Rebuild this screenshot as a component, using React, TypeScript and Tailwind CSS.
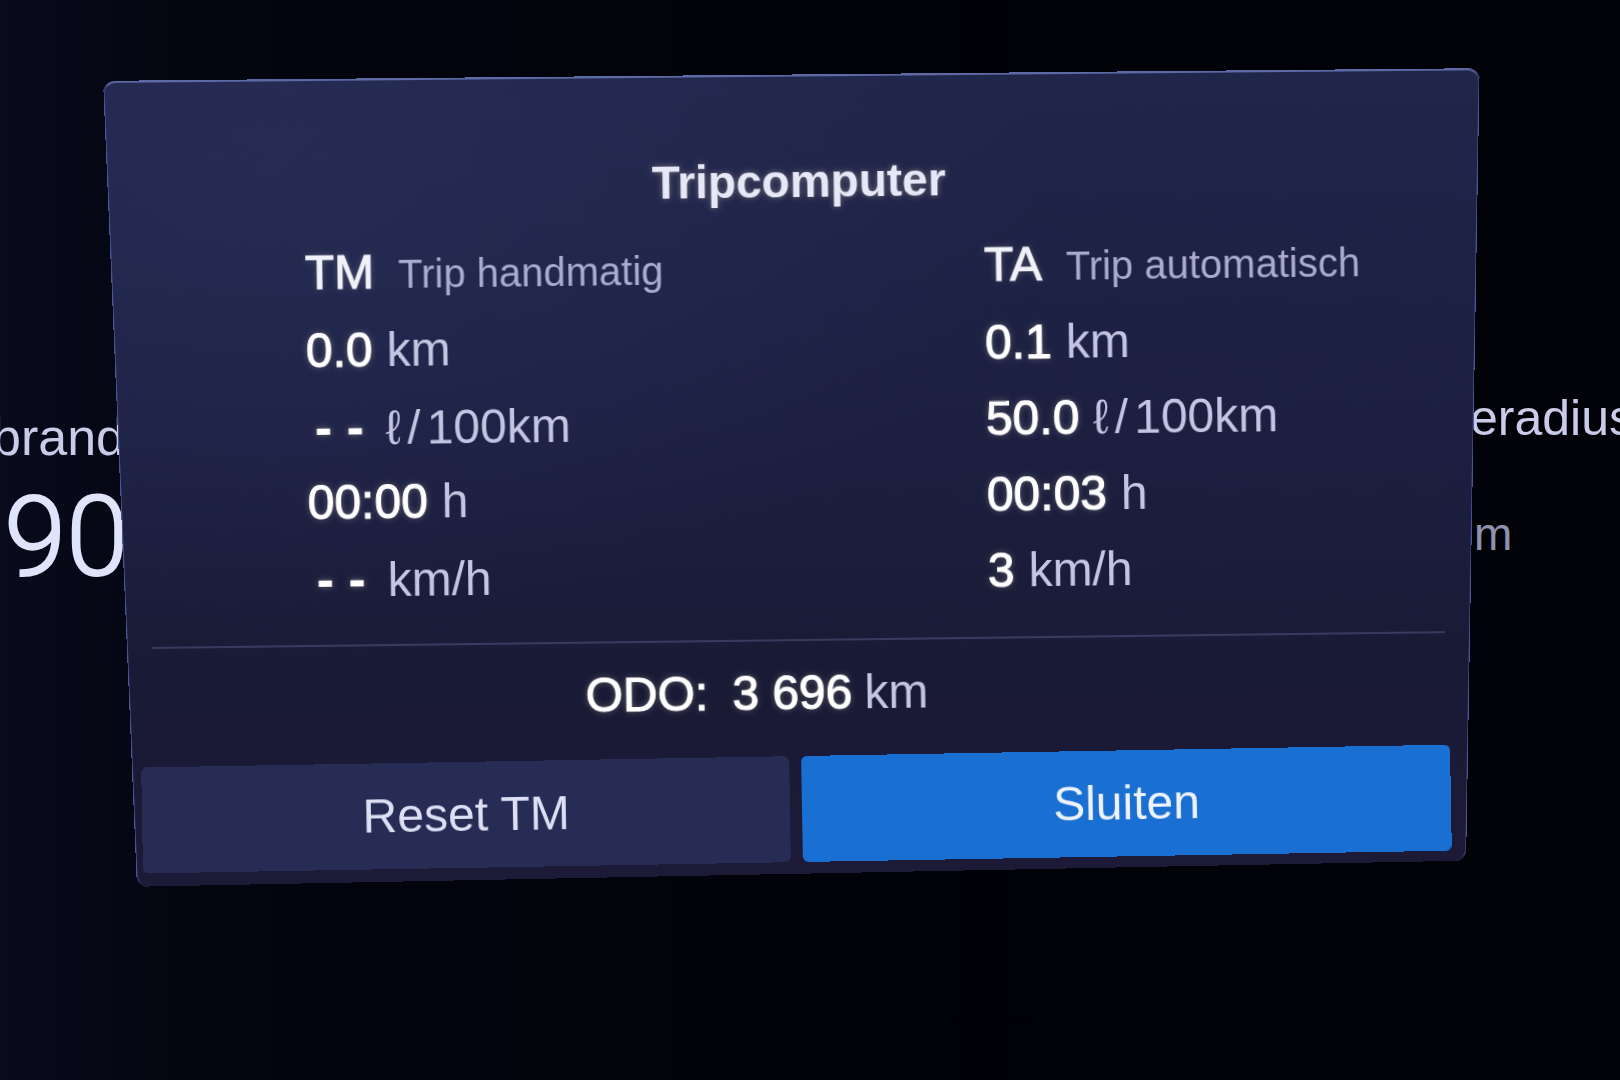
import React from 'react';

type Reading = { value: string; unit: string };

type Trip = { code: string; name: string; readings: Reading[] };

const trips: Trip[] = [
  {
    code: 'TM',
    name: 'Trip handmatig',
    readings: [
      { value: '0.0', unit: 'km' },
      { value: '- -', unit: 'ℓ/100km' },
      { value: '00:00', unit: 'h' },
      { value: '- -', unit: 'km/h' },
    ],
  },
  {
    code: 'TA',
    name: 'Trip automatisch',
    readings: [
      { value: '0.1', unit: 'km' },
      { value: '50.0', unit: 'ℓ/100km' },
      { value: '00:03', unit: 'h' },
      { value: '3', unit: 'km/h' },
    ],
  },
];

const Value = ({ children }: { children: string }) => (
  <span
    className={
      children === '- -'
        ? 'px-2 text-[52px] font-bold text-white [text-shadow:0_0_6px_#b9b6a080]'
        : 'text-[48px] text-white [-webkit-text-stroke:1px_white] [text-shadow:0_0_6px_#b9b6a080]'
    }
  >
    {children}
  </span>
);

/* The litre sign and the slash stand a little apart from what follows */
const Unit = ({ children }: { children: string }) => (
  <span className="text-[48px] text-[#c3c6e2]">
    {children.startsWith('ℓ/') ? (
      <>
        <span className="mr-1.5">ℓ</span>
        <span className="mr-1.5">/</span>
        {children.slice(2)}
      </>
    ) : (
      children
    )}
  </span>
);

const TripColumn = ({ trip }: { trip: Trip }) => (
  <section className="whitespace-nowrap leading-[76px]">
    <h2 className="flex items-baseline gap-6">
      <span className="text-[48px] text-[#f1f1fa] [-webkit-text-stroke:1px_#f1f1fa] [text-shadow:0_0_6px_#b9b6a060]">
        {trip.code}
      </span>
      <span className="text-[40px] text-[#a9abcf]">{trip.name}</span>
    </h2>
    <ul>
      {trip.readings.map((reading, index) => (
        <li key={index} className="flex h-[76px] items-baseline gap-3.5">
          <Value>{reading.value}</Value>
          <Unit>{reading.unit}</Unit>
        </li>
      ))}
    </ul>
  </section>
);

/* Instrument cluster that stays visible behind the dialog */
const Cluster = () => (
  <div className="[grid-area:1/1] flex justify-between overflow-hidden text-[#c9cce8]">
    <div className="-ml-2 pt-[409px]">
      <div className="text-[52px] leading-[56px]">brand</div>
      <div className="mt-4 pl-3 font-[Roboto,sans-serif] text-[112px] font-light leading-[112px] text-[#dfe4fb] [-webkit-text-stroke:2px_#dfe4fb]">
        90
      </div>
    </div>
    <div className="w-[150px] pt-[390px]">
      <div className="text-[50px] leading-[56px]">eradius</div>
      <div className="mt-15 pl-1 text-[46px] leading-[56px] text-[#8f91ad]">m</div>
    </div>
  </div>
);

const App = () => {
  return (
    <main className="grid min-h-screen overflow-hidden bg-[linear-gradient(90deg,#090b1d_0%,#03050f_12%,#010208_60%,#020309_100%)] font-['Liberation_Sans',Arial,sans-serif]">
      <Cluster />

      <div
        role="dialog"
        aria-labelledby="dialog-title"
        className="relative isolate [grid-area:1/1] mr-[1%] mt-20 w-[83.5%] -rotate-[0.7deg] justify-self-center self-start px-5 pb-5 pt-[69px]"
      >
        {/* Tilted backing plate */}
        <div className="absolute inset-0 -z-10 rounded-xl border-x border-t-2 border-x-[#4a5594] border-t-[#5c6ba6] bg-[radial-gradient(ellipse_at_12%_10%,#2b315e90_0%,#2b315e00_45%),linear-gradient(180deg,#20254a_0%,#1c1f40_45%,#191a35_75%,#1d1a38_100%)] [transform:perspective(2000px)_rotateX(-5deg)_rotateY(1.5deg)]" />

        <h1
          id="dialog-title"
          className="text-center text-[46px] font-bold leading-[64px] text-[#e6e7f7] [text-shadow:0_0_6px_#b9b6a080]"
        >
          Tripcomputer
        </h1>

        <div className="mt-4 grid grid-cols-[59%_41%] pl-[12.3%]">
          {trips.map((trip) => (
            <TripColumn key={trip.code} trip={trip} />
          ))}
        </div>

        <hr className="ml-1 mr-4 mt-7 border-t-2 border-[#393a5e]" />

        <div className="mt-6 flex items-baseline justify-center gap-3 pr-24 leading-[56px]">
          <span className="mr-3">
            <Value>ODO:</Value>
          </span>
          <Value>3 696</Value>
          <Unit>km</Unit>
        </div>

        <div className="-ml-2 mr-3 mt-6 grid -rotate-[0.3deg] grid-cols-2 gap-3 text-[48px] leading-[106px]">
          <button type="button" className="rounded-md bg-[#272c54] text-[#dddff5]">
            Reset TM
          </button>
          <button type="button" className="rounded-md bg-[#1a6fd2] text-[#eef2ff]">
            Sluiten
          </button>
        </div>
      </div>
    </main>
  );
};

export default App;
